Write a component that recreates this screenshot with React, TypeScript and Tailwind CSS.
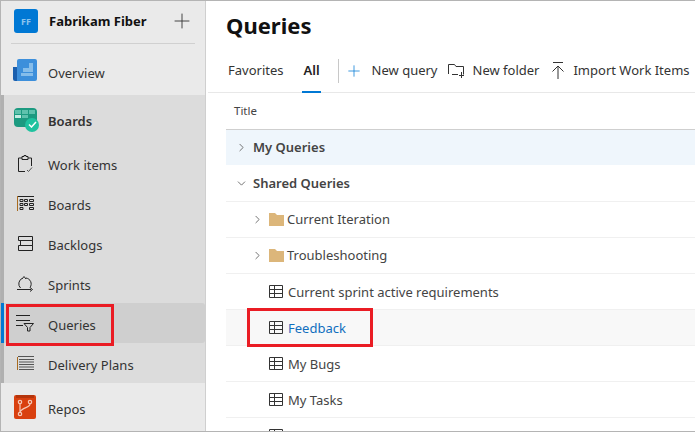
import React from 'react';
import { ChevronDown, ChevronRight, Plus } from 'lucide-react';

const GridIcon = () => (
  <svg width="14" height="13" viewBox="0 0 14 13" fill="none" stroke="#333" strokeWidth="1" className="shrink-0">
    <path d="M.5.5h13v12H.5zM.5 4.500h13M.5 8.500h13M5.500 .5v12" />
  </svg>
);

const Folder = () => (
  <svg width="15" height="13" viewBox="0 0 15 13" className="shrink-0">
    <path d="M0 0h6l2 2h7v11H0z" fill="#dcb67a" />
  </svg>
);

const NavIcon = ({ name }: { name: string }) => {
  if (name === 'work') {
    return (
      <svg width="15" height="17" viewBox="0 0 15 17" fill="none" stroke="#222" strokeWidth="1">
        <path d="M4 3H.5v13.500H7M10 3h3.500v8" />
        <path d="M4 4.500V1.500h2V.5h2v1h2v3z" />
        <path d="M9 15l1.500 1.500L14 12.500" stroke="#555" />
      </svg>
    );
  }
  if (name === 'boards') {
    return (
      <svg width="17" height="15" viewBox="0 0 17 15" fill="none" stroke="#222" strokeWidth="1">
        <path d="M.5 0v15" stroke="#a86b1f" />
        <path d="M1 .5h16" />
        <path d="M3 3.500h3v2H3zM7.500 3.500h3v2h-3zM12.500 3.500h4v2h-4zM3 7.500h3v2H3zM7.500 7.500h3v2h-3zM12.500 7.500h4v2h-4zM3 11.500h3v2H3zM12.500 11.500h4v2h-4z" />
      </svg>
    );
  }
  if (name === 'backlogs') {
    return (
      <svg width="15" height="15" viewBox="0 0 15 15" fill="none" stroke="#222" strokeWidth="1">
        <path d="M.5.5h14v4H.5zM2.500 4.500h12v5h-12zM.5 9.500h14v5H.5z" />
      </svg>
    );
  }
  if (name === 'sprints') {
    return (
      <svg width="17" height="17" viewBox="0 0 17 17" fill="none" stroke="#222" strokeWidth="1">
        <path d="M5 3.500a6 6 0 0 0-1.500 9.500M9 3a6 6 0 0 1 4 9.500" />
        <path d="M0 14.500h14M5 4l2-2.500L9 4M13 12.500l2.500 2-2.500 2" />
      </svg>
    );
  }
  if (name === 'queries') {
    return (
      <svg width="18" height="17" viewBox="0 0 18 17" fill="none" stroke="#222" strokeWidth="1">
        <path d="M0 .5h14M0 5.500h14M0 10.500h7M8 8.500h9.500l-3.500 4v3.500h-2.500v-3.500z" />
      </svg>
    );
  }
  return (
    <svg width="17" height="15" viewBox="0 0 17 15" fill="none" strokeWidth="1">
      <path d="M.5 1v13" stroke="#a86b1f" />
      <path d="M1 .5h16M2 3.500h15M2 6h15M2 8.500h15M2 11h15M2 13.500h15" stroke="#555" />
    </svg>
  );
};

const subItems = [
  { key: 'work', label: 'Work items' },
  { key: 'boards', label: 'Boards' },
  { key: 'backlogs', label: 'Backlogs' },
  { key: 'sprints', label: 'Sprints' },
  { key: 'queries', label: 'Queries', active: true },
  { key: 'plans', label: 'Delivery Plans' },
];

const queries = [
  { label: 'Current sprint active requirements' },
  { label: 'Feedback', active: true },
  { label: 'My Bugs' },
  { label: 'My Tasks' },
];

export default function App() {
  return (
    <div className="relative flex h-[432px] w-[695px] overflow-hidden border-y border-l border-[#b4b4b4] bg-white font-['Noto_Sans',sans-serif] text-[13px] text-[#333]">
      {/* Left nav */}
      <aside className="flex w-[205px] shrink-0 flex-col border-r border-[#cfcfcf] bg-[#eaeaea]">
        <div className="mx-[10px] flex h-[43px] items-center border-b border-[#d0d0d0] pl-[3px] pb-[1px]">
          <div className="flex h-6 w-6 items-center justify-center rounded-[3px] bg-[#0078d4] text-[9px] font-bold text-[#8cc4ee]">FF</div>
          <span className="ml-[11px] flex-1 text-[13px] font-bold text-[#111]">Fabrikam Fiber</span>
          <Plus size={24} strokeWidth={0.9} className="mr-[1px] text-[#333]" />
        </div>
        <div className="flex h-[52px] items-center pl-[12px]">
          <svg width="24" height="22" viewBox="0 0 24 22" className="mt-[1px]">
            <path d="M0 8h6v14H2a2 2 0 0 1-2-2z" fill="#1b5fae" />
            <path d="M4 2a2 2 0 0 1 2-2h16a2 2 0 0 1 2 2v18a2 2 0 0 1-2 2H4z" fill="#3d8fdb" />
            <path d="M16 4h4v5h-4zM10 9h10v4H10zM8 14h12v3H8z" fill="#86bdea" />
          </svg>
          <span className="ml-[11px] pt-[8px]">Overview</span>
        </div>
        <div className="flex h-[288px] flex-col border-l-[3px] border-[#b0b0b0] bg-[#dcdcdc]">
          <div className="flex h-[48px] items-center pl-[10px]">
            <div className="relative h-[23px] w-6">
              <div className="h-[19px] w-[23px] rounded-sm bg-[#1c9a80]" />
              <div className="absolute left-[1px] top-[2px] grid grid-cols-3 gap-[1px]">
                <span className="h-[4px] w-[6px] bg-[#5fc2ad]" />
                <span className="h-[4px] w-[6px] bg-[#5fc2ad]" />
                <span className="h-[4px] w-[6px] bg-[#5fc2ad]" />
                <span className="h-[3px] w-[6px] bg-[#c4ece3]" />
                <span className="h-[3px] w-[6px] bg-[#5fc2ad]" />
              </div>
              <div className="absolute -right-[1px] bottom-[-1px] flex h-[14px] w-[14px] items-center justify-center rounded-full bg-[#1fc29f]">
                <svg width="9" height="7" viewBox="0 0 9 7" fill="none" stroke="#fff" strokeWidth="1.500">
                  <path d="M1 3.500l2.500 2.500L8 1" />
                </svg>
              </div>
            </div>
            <span className="ml-[10px] pt-[4px] font-semibold">Boards</span>
          </div>
          {subItems.map((item) => (
            <div
              key={item.key}
              className={`-ml-[3px] flex h-10 items-center border-l-[3px] pl-[12px] ${item.active ? 'rounded-r-[3px] border-[#0078d4] bg-[#cfcfcf]' : 'border-transparent'}`}
            >
              <div className="flex w-[18px] justify-center">
                <NavIcon name={item.key} />
              </div>
              <span className="ml-[14px] pt-[4px]">{item.label}</span>
            </div>
          ))}
        </div>
        <div className="flex h-[48px] items-center pl-[13px]">
          <div className="relative h-[24px] w-[22px] rounded-[2px] bg-[#d9400f]">
            <div className="absolute left-[2px] right-[2px] top-0 h-[3px] bg-[#b5350c]" />
            <svg width="22" height="24" viewBox="0 0 22 24" fill="none" stroke="#f5c9b8" strokeWidth="1.200" className="absolute inset-0">
              <circle cx="6" cy="7" r="1.700" />
              <circle cx="6" cy="19" r="1.700" />
              <circle cx="16" cy="7" r="1.700" />
              <path d="M6 9v8M16 9c0 4-8 3-10 8" />
            </svg>
          </div>
          <span className="ml-[12px] pt-[5px]">Repos</span>
        </div>
      </aside>

      {/* Main */}
      <main className="min-w-0 flex-1">
        <h1 className="ml-[20px] flex h-[50px] items-center pb-[1px] text-[22px] font-bold text-[#111]">Queries</h1>
        <div className="ml-[2px] flex h-[42px] items-center border-b border-[#e8e8e8] pb-[2px] pl-[20px]">
          <span>Favorites</span>
          <span className="relative ml-[20px] font-semibold text-[#222]">
            All
            <span className="absolute -bottom-[13px] -left-[1px] -right-[1px] h-[2px] bg-[#0078d4]" />
          </span>
          <div className="ml-[18px] h-6 w-px bg-[#c8c8c8]" />
          <Plus size={18} strokeWidth={1} className="ml-[6px] text-[#0078d4]" />
          <span className="ml-[9px] whitespace-nowrap">New query</span>
          <svg width="18" height="15" viewBox="0 0 18 15" fill="none" stroke="#333" strokeWidth="1" className="ml-[10px]">
            <path d="M.5 11V1.500h6l1.500 2h7.500v8M4 11.500h6M13.500 9v6M11 12.500h5" />
          </svg>
          <span className="ml-[7px] whitespace-nowrap">New folder</span>
          <svg width="14" height="17" viewBox="0 0 14 17" fill="none" stroke="#333" strokeWidth="1" className="ml-[12px]">
            <path d="M2 .5h10M7 17V4M1.500 9.500L7 4l5.500 5.500" />
          </svg>
          <span className="ml-[8px] whitespace-nowrap">Import Work Items</span>
        </div>
        <div className="ml-[20px]">
          <div className="flex h-[37px] items-center border-b border-[#cfcfcf] pl-[8px] text-[11.500px] text-[#444]">Title</div>
          <div className="flex h-[35px] items-center bg-[#eff6fc] pl-[9px] font-semibold text-[#444]">
            <ChevronRight size={13} strokeWidth={1.5} className="text-[#555]" />
            <span className="ml-[5px]">My Queries</span>
          </div>
          <div className="flex h-[37px] items-center border-b border-[#f0f0f0] pl-[9px] font-semibold text-[#444]">
            <ChevronDown size={13} strokeWidth={1.5} className="text-[#555]" />
            <span className="ml-[5px] pt-[2px]">Shared Queries</span>
          </div>
          {['Current Iteration', 'Troubleshooting'].map((name) => (
            <div key={name} className="flex h-9 items-center border-b border-[#f0f0f0] pl-[25px] text-[#444]">
              <ChevronRight size={13} strokeWidth={1.5} className="text-[#555]" />
              <span className="ml-[5px]"><Folder /></span>
              <span className="ml-[3px]">{name}</span>
            </div>
          ))}
          {queries.map((q) => (
            <div
              key={q.label}
              className={`flex h-9 items-center border-b border-[#f0f0f0] pl-[43px] ${q.active ? 'bg-[#f8f8f8] text-[#106ebe]' : 'text-[#444]'}`}
            >
              <GridIcon />
              <span className="ml-[5px] whitespace-nowrap pt-[2px]">{q.label}</span>
            </div>
          ))}
          <div className="flex h-4 items-start pl-[43px] pt-[11px]">
            <GridIcon />
          </div>
        </div>
      </main>

      {/* Red callouts */}
      <div className="absolute left-[5px] top-[303px] h-[42px] w-[108px] border-[3px] border-[#ea1c24]" />
      <div className="absolute left-[246px] top-[307px] h-[39px] w-[126px] border-[3px] border-[#ea1c24]" />
    </div>
  );
}
